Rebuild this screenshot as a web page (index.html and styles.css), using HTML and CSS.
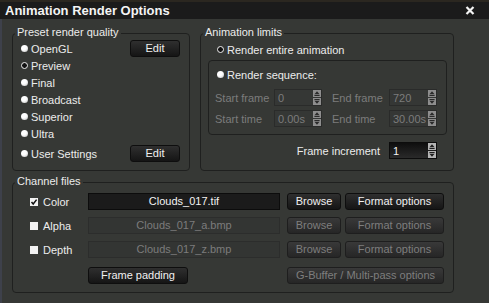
FILE: index.html
```html
<!DOCTYPE html>
<html lang="en">
  <head>
    <meta charset="UTF-8" />
    <title>Animation Render Options</title>
    <link rel="stylesheet" href="styles.css">
  </head>
  <body>
    <div class="window">
      <div class="titlebar">
        <span class="title">Animation Render Options</span>
        <svg class="close" width="10" height="9" viewBox="0 0 10 9">
          <path d="M1.5 1 L8.5 8 M8.5 1 L1.5 8" stroke="#f4f4f4" stroke-width="2.2" />
        </svg>
      </div>

      <div class="content">
        <div class="top">
          <!-- preset quality -->
          <div class="group preset">
            <span class="legend">Preset render quality</span>
            <div class="row"><span class="radio"></span>OpenGL<button class="btn edit">Edit</button></div>
            <div class="row"><span class="radio on"></span>Preview</div>
            <div class="row"><span class="radio"></span>Final</div>
            <div class="row"><span class="radio"></span>Broadcast</div>
            <div class="row"><span class="radio"></span>Superior</div>
            <div class="row"><span class="radio"></span>Ultra</div>
            <div class="row user"><span class="radio"></span>User Settings<button class="btn edit">Edit</button></div>
          </div>

          <!-- animation limits -->
          <div class="group limits">
            <span class="legend">Animation limits</span>
            <div class="row entire"><span class="radio on"></span>Render entire animation</div>
            <div class="sequence">
              <div class="row seq-radio"><span class="radio"></span>Render sequence:</div>
              <div class="field-row first">
                <span class="lbl">Start frame</span>
                <span class="spin"><span class="val">0</span><svg class="arrows" width="8" height="15" viewBox="0 0 8 15"><rect width="8" height="7" fill="#8e8e8e"/><rect y="8" width="8" height="7" fill="#8e8e8e"/><polygon points="4,1.2 6.6,4.2 1.4,4.2" fill="#2a2a2a"/><rect x="1.4" y="5" width="5.2" height="1" fill="#2a2a2a"/><rect x="1.4" y="9" width="5.2" height="1" fill="#2a2a2a"/><polygon points="1.4,10.8 6.6,10.8 4,13.8" fill="#2a2a2a"/></svg></span>
                <span class="lbl end">End frame</span>
                <span class="spin"><span class="val">720</span><svg class="arrows" width="8" height="15" viewBox="0 0 8 15"><rect width="8" height="7" fill="#8e8e8e"/><rect y="8" width="8" height="7" fill="#8e8e8e"/><polygon points="4,1.2 6.6,4.2 1.4,4.2" fill="#2a2a2a"/><rect x="1.4" y="5" width="5.2" height="1" fill="#2a2a2a"/><rect x="1.4" y="9" width="5.2" height="1" fill="#2a2a2a"/><polygon points="1.4,10.8 6.6,10.8 4,13.8" fill="#2a2a2a"/></svg></span>
              </div>
              <div class="field-row">
                <span class="lbl">Start time</span>
                <span class="spin"><span class="val">0.00s</span><svg class="arrows" width="8" height="15" viewBox="0 0 8 15"><rect width="8" height="7" fill="#8e8e8e"/><rect y="8" width="8" height="7" fill="#8e8e8e"/><polygon points="4,1.2 6.6,4.2 1.4,4.2" fill="#2a2a2a"/><rect x="1.4" y="5" width="5.2" height="1" fill="#2a2a2a"/><rect x="1.4" y="9" width="5.2" height="1" fill="#2a2a2a"/><polygon points="1.4,10.8 6.6,10.8 4,13.8" fill="#2a2a2a"/></svg></span>
                <span class="lbl end">End time</span>
                <span class="spin"><span class="val">30.00s</span><svg class="arrows" width="8" height="15" viewBox="0 0 8 15"><rect width="8" height="7" fill="#8e8e8e"/><rect y="8" width="8" height="7" fill="#8e8e8e"/><polygon points="4,1.2 6.6,4.2 1.4,4.2" fill="#2a2a2a"/><rect x="1.4" y="5" width="5.2" height="1" fill="#2a2a2a"/><rect x="1.4" y="9" width="5.2" height="1" fill="#2a2a2a"/><polygon points="1.4,10.8 6.6,10.8 4,13.8" fill="#2a2a2a"/></svg></span>
              </div>
            </div>
            <div class="increment">
              <span class="inc-lbl">Frame increment</span>
              <span class="spin active"><span class="val">1</span><svg class="arrows" width="8" height="15" viewBox="0 0 8 15"><rect width="8" height="7" fill="#b4b4b4"/><rect y="8" width="8" height="7" fill="#b4b4b4"/><polygon points="4,1.2 6.6,4.2 1.4,4.2" fill="#1c1c1c"/><rect x="1.4" y="5" width="5.2" height="1" fill="#1c1c1c"/><rect x="1.4" y="9" width="5.2" height="1" fill="#1c1c1c"/><polygon points="1.4,10.8 6.6,10.8 4,13.8" fill="#1c1c1c"/></svg></span>
            </div>
          </div>
        </div>

        <!-- channel files -->
        <div class="group channels">
          <span class="legend">Channel files</span>
          <div class="ch-row">
            <svg class="check" width="8" height="8" viewBox="0 0 8 8"><rect width="8" height="8" fill="#f2f2f2"/><path d="M1.5 4 L3.2 6 L6.6 1.6" stroke="#111" stroke-width="1.5" fill="none"/></svg>
            <span class="ch-lbl">Color</span>
            <span class="file active">Clouds_017.tif</span>
            <button class="btn browse">Browse</button>
            <button class="btn format">Format options</button>
          </div>
          <div class="ch-row">
            <span class="check box"></span>
            <span class="ch-lbl">Alpha</span>
            <span class="file">Clouds_017_a.bmp</span>
            <button class="btn browse off">Browse</button>
            <button class="btn format off">Format options</button>
          </div>
          <div class="ch-row">
            <span class="check box"></span>
            <span class="ch-lbl">Depth</span>
            <span class="file">Clouds_017_z.bmp</span>
            <button class="btn browse off">Browse</button>
            <button class="btn format off">Format options</button>
          </div>
          <div class="ch-row padding-row">
            <button class="btn padding">Frame padding</button>
            <button class="btn gbuffer off">G-Buffer / Multi-pass options</button>
          </div>
        </div>

        <div class="group output">
          <span class="legend">Frame output</span>
        </div>
      </div>
    </div>
  </body>
</html>
```

FILE: styles.css
```css
* {
  margin: 0;
  padding: 0;
  box-sizing: border-box;
}

body {
  width: 489px;
  height: 303px;
  overflow: hidden;
  background-color: #363835;
  font-family: "Liberation Sans", Arial, sans-serif;
  font-size: 11px;
  color: #ececec;
}

.window {
  height: 303px;
  border-top: 2px solid #2b2720;
}

/* title bar */
.titlebar {
  height: 17px;
  background-color: #1b1b1b;
  display: flex;
  align-items: center;
  padding: 0 14px 0 5px;
}
.title {
  font-size: 13px;
  font-weight: bold;
  color: #f4f4f4;
}
.close {
  margin-left: auto;
}

.content {
  height: 284px;
  border-left: 2px solid #3e414b;
  padding: 14px 35px 0 10px;
}

.top {
  display: flex;
  gap: 10px;
}

/* group boxes */
.group {
  position: relative;
  border: 1px solid #1f201f;
  border-radius: 4px;
}
.legend {
  position: absolute;
  top: -8px;
  left: 2px;
  padding: 0 2px;
  line-height: 13px;
  background-color: #363835;
  white-space: nowrap;
}

.row {
  display: flex;
  align-items: center;
  height: 17px;
}

.radio {
  width: 7px;
  height: 7px;
  border-radius: 50%;
  margin-right: 3px;
  background: radial-gradient(circle at 40% 35%, #ffffff 40%, #b8b8b8 100%);
}
.radio.on {
  background: #111;
  border: 1px solid #f0f0f0;
}

/* preset */
.preset {
  width: 178px;
  padding: 6px 9px 8px 8px;
}
.preset .user {
  margin-top: 3px;
}

.btn {
  height: 17px;
  border: 1px solid #0e0e0e;
  border-radius: 3px;
  background: linear-gradient(#2f2f2f, #151515);
  color: #f0f0f0;
  font-family: inherit;
  font-size: 11px;
  line-height: 15px;
}
.btn.off {
  background: linear-gradient(#393939, #262626);
  border-color: #1e1e1e;
  color: #7e7e7e;
}
.edit {
  width: 50px;
  margin-left: auto;
}

/* animation limits */
.limits {
  width: 254px;
  padding: 7px 6px 11px 7px;
}
.limits .entire {
  padding-left: 9px;
}
.sequence {
  margin-top: 2px;
  border: 1px solid #1f201f;
  border-radius: 4px;
  padding: 5px 9px 7px 6px;
}
.seq-radio {
  padding-left: 2px;
}
.field-row {
  display: flex;
  align-items: center;
  height: 17px;
  margin-top: 4px;
}
.field-row.first {
  margin-top: 6px;
}
.lbl {
  width: 59px;
  color: #7c7c7c;
}
.lbl.end {
  width: 57px;
  margin-left: 10px;
}

.spin {
  width: 48px;
  height: 17px;
  display: flex;
  align-items: center;
  border: 1px solid #2a2b2a;
  background-color: #353735;
  padding-left: 3px;
  color: #7c7c7c;
}
.spin .val {
  flex: 1;
}
.spin.active {
  border-color: #0c0c0c;
  background: linear-gradient(#0e0e0e, #2a2a2a);
  color: #f2f2f2;
}

.increment {
  display: flex;
  align-items: center;
  justify-content: flex-end;
  height: 17px;
  margin-top: 7px;
  margin-right: 10px;
}
.inc-lbl {
  margin-right: 9px;
}

/* channel files */
.channels {
  margin-top: 11px;
  padding: 10px 9px 8px 17px;
}
.ch-row {
  display: flex;
  align-items: center;
  height: 17px;
}
.ch-row + .ch-row {
  margin-top: 7px;
}
.ch-row.padding-row {
  margin-top: 9px;
}
.check {
  width: 8px;
  height: 8px;
  margin-right: 5px;
}
.check.box {
  background-color: #f2f2f2;
}
.ch-lbl {
  width: 45px;
}
.file {
  width: 192px;
  height: 17px;
  line-height: 15px;
  text-align: center;
  border: 1px solid #2c2d2c;
  background-color: #333533;
  color: #7c7c7c;
}
.file.active {
  border-color: #0c0c0c;
  background-color: #1b1b1b;
  color: #f2f2f2;
}
.browse {
  width: 54px;
  margin-left: 7px;
}
.format {
  width: 99px;
  margin-left: 4px;
}
.padding {
  width: 100px;
  margin-left: 58px;
}
.gbuffer {
  width: 157px;
  margin-left: auto;
}

.output {
  margin-top: 15px;
  height: 40px;
}
```
